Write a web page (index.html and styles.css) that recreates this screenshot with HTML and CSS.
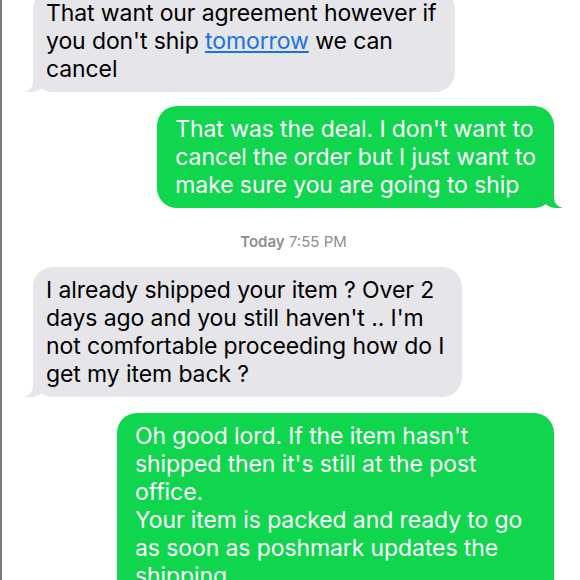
FILE: index.html
```html
<!DOCTYPE html>
<html lang="en">
<head>
    <meta charset="UTF-8">
    <meta name="viewport" content="width=device-width, initial-scale=1.0">
    <title>Messages</title>
    <link rel="stylesheet" href="styles.css">
</head>
<body>
    <div class="thread">
        <div class="bubble received first">
            That want our agreement however if<br>
            you don't ship <a href="#">tomorrow</a> we can<br>
            cancel
        </div>

        <div class="bubble sent">
            That was the deal. I don't want to<br>
            cancel the order but I just want to<br>
            make sure you are going to ship
        </div>

        <div class="timestamp"><b>Today</b> 7:55 PM</div>

        <div class="bubble received">
            I already shipped your item ? Over 2<br>
            days ago and you still haven't .. I'm<br>
            not comfortable proceeding how do I<br>
            get my item back ?
        </div>

        <div class="bubble sent long">
            Oh good lord. If the item hasn't<br>
            shipped then it's still at the post<br>
            office.<br>
            Your item is packed and ready to go<br>
            as soon as poshmark updates the<br>
            shipping.
        </div>
    </div>
</body>
</html>
```

FILE: styles.css
```css
/* Basic Styling */
html, body {
    height: 100%;
}
body {
    margin: 0;
    font-family: Inter, "Liberation Sans", Arial, sans-serif;
    background-color: #fff;
    border-left: 2px solid #7a7a7a;
    overflow: hidden;
}
/* Thread */
.thread {
    display: flex;
    flex-direction: column;
    gap: 14px;
    padding: 0 26px 0 31px;
    margin-top: -10px;
}
.bubble {
    position: relative;
    font-size: 23px;
    font-weight: 400;
    line-height: 28px;
    letter-spacing: -0.1px;
    padding: 9px 18px 9px 13px;
    border-radius: 20px;
}
.received {
    align-self: flex-start;
    background-color: #e5e5ea;
    color: #000;
}
.sent {
    align-self: flex-end;
    background-color: #10d64e;
    color: #fff;
    padding: 9px 18px;
}
.sent.long {
    width: 401px;
    margin-top: 2px;
}
.received a {
    color: #1a73e0;
}
/* Tails */
.bubble::before, .bubble::after {
    content: "";
    position: absolute;
    bottom: 0;
    height: 22px;
}
.received::before {
    left: -8px;
    width: 22px;
    background-color: #e5e5ea;
    border-bottom-right-radius: 16px;
}
.received::after {
    left: -14px;
    width: 14px;
    background-color: #fff;
    border-bottom-right-radius: 10px;
}
.sent::before {
    right: -8px;
    width: 22px;
    background-color: #10d64e;
    border-bottom-left-radius: 16px;
}
.sent::after {
    right: -14px;
    width: 14px;
    background-color: #fff;
    border-bottom-left-radius: 10px;
}
.timestamp {
    text-align: center;
    font-size: 15px;
    color: #8e8e93;
    margin: 10px 0 2px;
}
.timestamp b {
    font-weight: 600;
}
```
